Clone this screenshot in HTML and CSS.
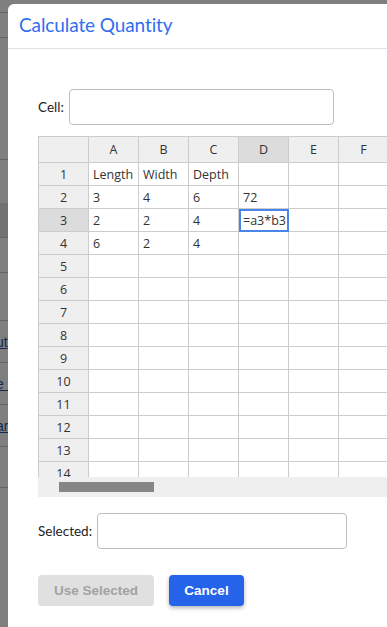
FILE: index.html
```html
<!DOCTYPE html>
<html>
<head>
<meta charset="utf-8">
<link rel="stylesheet" href="styles.css">
</head>
<body>
<div class="page">
  <div class="bg-row h12"></div>
  <div class="bg-row h25 line"></div>
  <div class="bg-row h122 line"></div>
  <div class="bg-row h26 line"></div>
  <div class="bg-row h18"></div>
  <div class="bg-row h34 dark"><span class="bg-text">l</span></div>
  <div class="bg-row h35 line"></div>
  <div class="bg-row h48 line"></div>
  <div class="bg-row h42 line link"><span class="bg-text">ut</span></div>
  <div class="bg-row h42 line link"><span class="bg-text">e (</span></div>
  <div class="bg-row h42 line link"><span class="bg-text">ar</span></div>
  <div class="bg-row h41 line"></div>
  <div class="bg-row h139 line"></div>
</div>
<div class="backdrop"></div>
<div class="modal">
  <div class="modal-header">
    <h2 class="modal-title">Calculate Quantity</h2>
  </div>
  <div class="modal-body">
    <div class="field">
      <label class="field-label">Cell:</label>
      <input class="field-input cell-input" type="text">
    </div>
    <div class="sheet">
      <div class="sheet-view">
        <table class="grid">
          <colgroup>
            <col class="c"><col class="c"><col class="c"><col class="c"><col class="c"><col class="c"><col class="c"><col class="c">
          </colgroup>
          <thead>
            <tr><th class="corner"></th><th>A</th><th>B</th><th>C</th><th class="hl">D</th><th>E</th><th>F</th><th>G</th></tr>
          </thead>
          <tbody>
            <tr><th>1</th><td>Length</td><td>Width</td><td>Depth</td><td></td><td></td><td></td><td></td></tr>
            <tr><th>2</th><td>3</td><td>4</td><td>6</td><td>72</td><td></td><td></td><td></td></tr>
            <tr><th class="hl">3</th><td>2</td><td>2</td><td>4</td><td class="active">=a3*b3</td><td></td><td></td><td></td></tr>
            <tr><th>4</th><td>6</td><td>2</td><td>4</td><td></td><td></td><td></td><td></td></tr>
            <tr><th>5</th><td></td><td></td><td></td><td></td><td></td><td></td><td></td></tr>
            <tr><th>6</th><td></td><td></td><td></td><td></td><td></td><td></td><td></td></tr>
            <tr><th>7</th><td></td><td></td><td></td><td></td><td></td><td></td><td></td></tr>
            <tr><th>8</th><td></td><td></td><td></td><td></td><td></td><td></td><td></td></tr>
            <tr><th>9</th><td></td><td></td><td></td><td></td><td></td><td></td><td></td></tr>
            <tr><th>10</th><td></td><td></td><td></td><td></td><td></td><td></td><td></td></tr>
            <tr><th>11</th><td></td><td></td><td></td><td></td><td></td><td></td><td></td></tr>
            <tr><th>12</th><td></td><td></td><td></td><td></td><td></td><td></td><td></td></tr>
            <tr><th>13</th><td></td><td></td><td></td><td></td><td></td><td></td><td></td></tr>
            <tr><th>14</th><td></td><td></td><td></td><td></td><td></td><td></td><td></td></tr>
            <tr><th>15</th><td></td><td></td><td></td><td></td><td></td><td></td><td></td></tr>
          </tbody>
        </table>
      </div>
      <div class="hscroll"><div class="hscroll-thumb"></div></div>
    </div>
    <div class="field selected-field">
      <label class="field-label">Selected:</label>
      <input class="field-input selected-input" type="text">
    </div>
    <div class="actions">
      <button class="btn btn-disabled" type="button">Use Selected</button>
      <button class="btn btn-primary" type="button">Cancel</button>
    </div>
  </div>
</div>
</body>
</html>
```
FILE: styles.css
```css
html, body {
  margin: 0;
  padding: 0;
  width: 387px;
  height: 627px;
  overflow: hidden;
}
body {
  font-family: "Open Sans", "Noto Sans", sans-serif;
  background: #ffffff;
  position: relative;
}
.page {
  display: flex;
  flex-direction: column;
  width: 387px;
}
.bg-row {
  box-sizing: border-box;
  background: #ffffff;
  font-family: "Liberation Sans", sans-serif;
  font-size: 14px;
  display: flex;
  align-items: center;
}
.bg-row.line { border-top: 1px solid #c8c8c8; }
.bg-row.dark { background: #e4e4e4; }
.bg-row.link .bg-text { color: #2a4fa0; text-decoration: underline; }
.bg-text { color: #333; margin-left: -4px; }
.h12 { height: 12px; } .h18 { height: 18px; } .h25 { height: 25px; } .h26 { height: 26px; }
.h34 { height: 34px; } .h35 { height: 35px; } .h41 { height: 41px; } .h42 { height: 42px; }
.h48 { height: 48px; } .h122 { height: 122px; } .h139 { height: 139px; }

.backdrop {
  position: absolute;
  inset: 0;
  background: rgba(0, 0, 0, 0.5);
}
.modal {
  position: absolute;
  left: 8px;
  top: 4px;
  width: 440px;
  height: 640px;
  background: #ffffff;
  border-radius: 6px 6px 0 0;
  overflow: hidden;
}
.modal-header {
  box-sizing: border-box;
  height: 45px;
  border-bottom: 1px solid #dee2e6;
  display: flex;
  align-items: center;
  padding: 0 0 3px 11px;
}
.modal-title {
  margin: 0;
  font-family: "Lato", sans-serif;
  font-weight: 400;
  font-size: 19px;
  letter-spacing: -0.1px;
  color: #2f6ef0;
}
.modal-body {
  padding: 40px 0 0 30px;
}
.field {
  display: flex;
  align-items: center;
  gap: 5px;
}
.field-label {
  font-family: "Lato", sans-serif;
  font-size: 13.5px;
  color: #222;
}
.field-input {
  box-sizing: border-box;
  height: 36px;
  border: 1px solid #bdbdbd;
  border-radius: 4px;
  background: #fff;
  margin: 0;
}
.cell-input { width: 265px; }
.selected-input { width: 250px; }

.sheet {
  margin-top: 11px;
}
.sheet-view {
  height: 341px;
  overflow: hidden;
}
.grid {
  border-collapse: collapse;
  table-layout: fixed;
  width: 400px;
  font-family: "Open Sans", sans-serif;
  font-size: 12.5px;
  color: #333;
}
.grid col.c { width: 50px; }
.grid th, .grid td {
  box-sizing: border-box;
  border: 1px solid #cccccc;
  height: 23px;
  padding: 0 4px;
  white-space: nowrap;
  overflow: hidden;
}
.grid td { text-align: left; background: #fff; }
.grid th {
  font-weight: 400;
  background: #efefef;
  text-align: center;
}
.grid thead th { height: 26px; }
.grid th.hl { background: #dcdcdc; }
.grid td.active {
  outline: 2px solid #4a86e8;
  outline-offset: -2px;
}
.hscroll {
  height: 20px;
  background: #efefef;
  width: 349px;
  display: flex;
  align-items: center;
}
.hscroll-thumb {
  margin-left: 21px;
  width: 95px;
  height: 10px;
  background: #868686;
}
.selected-field {
  margin-top: 16px;
}
.actions {
  display: flex;
  gap: 15px;
  margin-top: 26px;
}
.btn {
  height: 31px;
  border: none;
  border-radius: 4px;
  font-family: "Liberation Sans", sans-serif;
  font-weight: 700;
  font-size: 13.5px;
  padding: 0 12px;
}
.btn-disabled {
  width: 116px;
  background: #e0e0e0;
  color: #a2a2a2;
}
.btn-primary {
  width: 75px;
  background: #2563eb;
  color: #ffffff;
  box-shadow: 0 2px 4px rgba(0, 0, 0, 0.3);
}
```
